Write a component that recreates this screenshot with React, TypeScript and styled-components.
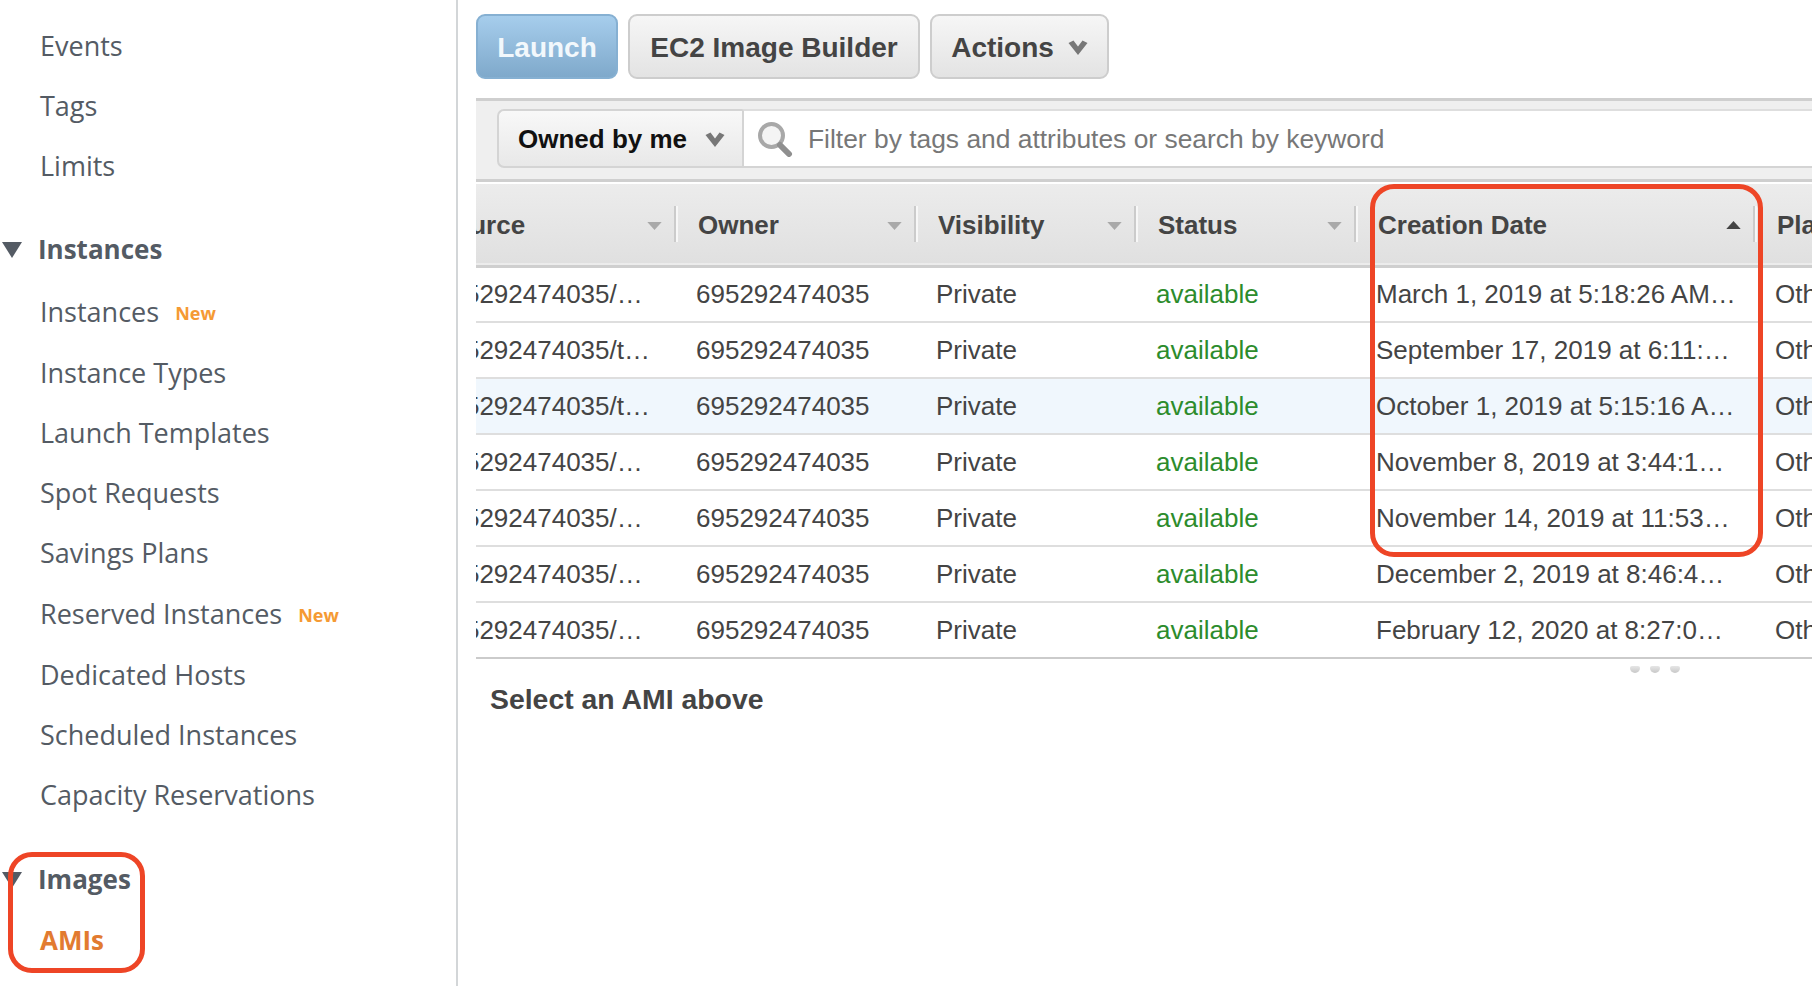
import React from "react";
import styled, { createGlobalStyle } from "styled-components";

const Global = createGlobalStyle`
  html, body {
    margin: 0;
    padding: 0;
    background: #fff;
  }
`;

const Page = styled.div`
  position: relative;
  width: 1812px;
  height: 986px;
  overflow: hidden;
  display: flex;
  background: #fff;
`;

const Sidebar = styled.nav`
  width: 458px;
  height: 986px;
  flex: none;
  box-sizing: border-box;
  padding-top: 15px;
  border-right: 2px solid #d3d6d8;
  font-family: "Open Sans", sans-serif;
  color: #545b64;
`;

const NavItem = styled.div<{ $tall?: boolean; $active?: boolean }>`
  height: ${props => (props.$tall ? 62 : 60)}px;
  padding-left: 40px;
  display: flex;
  align-items: center;
  font-size: ${props => (props.$active ? 26 : 27)}px;
  font-weight: ${props => (props.$active ? 700 : 400)};
  color: ${props => (props.$active ? "#e27b30" : "#545b64")};
`;

const NavHead = styled.div<{ $gap: number }>`
  height: 62px;
  margin-top: ${props => props.$gap}px;
  display: flex;
  align-items: center;
  font-size: 26px;
  font-weight: 700;
`;

const Caret = styled.svg`
  width: 20px;
  height: 17px;
  margin: 0 16px 0 2px;
  flex: none;
`;

const NewTag = styled.span`
  margin-left: 16px;
  margin-top: 4px;
  font-size: 18px;
  font-weight: 700;
  color: #f59a33;
`;

const Main = styled.main`
  flex: 1;
  min-width: 0;
  margin-left: 18px;
  padding-top: 14px;
  overflow: hidden;
  font-family: "Liberation Sans", Arial, sans-serif;
  color: #444;
`;

const Toolbar = styled.div`
  display: flex;
  gap: 10px;
  height: 65px;
`;

const Button = styled.div<{ $primary?: boolean; $width: number }>`
  width: ${props => props.$width}px;
  box-sizing: border-box;
  display: flex;
  align-items: center;
  justify-content: center;
  gap: 14px;
  padding-top: 2px;
  border-radius: 9px;
  border: 2px solid ${props => (props.$primary ? "#86b0d2" : "#cdcdcd")};
  background: ${props =>
    props.$primary
      ? "linear-gradient(#a6cdec, #7fa9cb)"
      : "linear-gradient(#f6f6f6, #e3e3e3)"};
  color: ${props => (props.$primary ? "#f2f8fc" : "#444")};
  font-size: 28px;
  font-weight: 700;
`;

const FilterBand = styled.div`
  height: 84px;
  margin-top: 19px;
  box-sizing: border-box;
  padding: 8px 0 11px 21px;
  display: flex;
  border-top: 3px solid #cfcfcf;
  border-bottom: 3px solid #cfcfcf;
  background: #efefef;
`;

const OwnerSelect = styled.div`
  width: 245px;
  box-sizing: border-box;
  display: flex;
  align-items: center;
  justify-content: space-between;
  padding: 1px 17px 0 19px;
  border: 2px solid #d4d4d4;
  border-right: none;
  border-radius: 7px 0 0 7px;
  background: linear-gradient(#f8f8f8, #e8e8e8);
  color: #111;
  font-size: 26px;
  font-weight: 700;
`;

const SearchBox = styled.div`
  flex: 1;
  display: flex;
  align-items: center;
  gap: 15px;
  padding: 1px 0 0 13px;
  border-left: 2px solid #d4d4d4;
  border-top: 2px solid #dedede;
  border-bottom: 2px solid #d4d4d4;
  background: #fff;
  color: #777;
  font-size: 26.4px;
`;

const Table = styled.table`
  width: 1336px;
  margin-top: 2px;
  table-layout: fixed;
  border-collapse: collapse;
  font-size: 26px;
`;

const Heading = styled.tr`
  height: 82px;
  background: linear-gradient(#ececec, #e0e0e0);
  border-bottom: 3px solid #cfcfcf;
  th {
    padding: 0;
    text-align: left;
  }
`;

const HeadCell = styled.div<{ $clipped?: boolean; $noLine?: boolean }>`
  height: 36px;
  box-sizing: border-box;
  display: flex;
  align-items: center;
  justify-content: space-between;
  padding: 2px 12px 0 ${props => (props.$clipped ? 0 : 22)}px;
  white-space: nowrap;
  font-weight: 700;
  color: #444;
  border-right: ${props => (props.$noLine ? "none" : "2px solid #cbcbcb")};
  box-shadow: ${props => (props.$noLine ? "none" : "2px 0 0 #f7f7f7")};
  span {
    margin-left: ${props => (props.$clipped ? -39 : 0)}px;
  }
`;

const Row = styled.tr<{ $selected?: boolean }>`
  height: 56px;
  background: ${props => (props.$selected ? "#f0f7fd" : "#fff")};
  border-bottom: 2px solid #dedede;
  &:last-child {
    border-bottom-color: #cbcbcb;
  }
`;

const Cell = styled.td<{ $clipped?: boolean; $green?: boolean }>`
  padding: 0 0 0 ${props => (props.$clipped ? 0 : 20)}px;
  white-space: nowrap;
  overflow: hidden;
  color: ${props => (props.$green ? "#2c8c2c" : "#444")};
  span {
    margin-left: ${props => (props.$clipped ? -40 : 0)}px;
    display: inline-block;
  }
`;

const Grip = styled.div`
  display: flex;
  justify-content: flex-end;
  gap: 10px;
  height: 8px;
  margin: 7px 132px 0 0;
`;

const GripDot = styled.i`
  width: 10px;
  height: 7px;
  border-radius: 2px 2px 5px 5px;
  background: linear-gradient(#e6e6e6, #c8c8c8);
`;

const Placeholder = styled.div`
  margin: 9px 0 0 14px;
  font-size: 28.4px;
  font-weight: 700;
  color: #444;
`;

const Callout = styled.div<{ $left: number; $top: number; $width: number; $height: number; $radius: number }>`
  position: absolute;
  left: ${props => props.$left}px;
  top: ${props => props.$top}px;
  width: ${props => props.$width}px;
  height: ${props => props.$height}px;
  box-sizing: border-box;
  border: 5px solid #ee4526;
  border-radius: ${props => props.$radius}px;
`;

const Triangle = ({ up, color }: { up?: boolean; color: string }) => (
  <svg width="15" height="9" viewBox="0 0 16 10" style={{ flex: "none" }}>
    <path d={up ? "M8 0 L16 9 L0 9 Z" : "M0 1 L16 1 L8 10 Z"} fill={color} />
  </svg>
);

const Chevron = () => (
  <svg width="20" height="15" viewBox="0 0 20 15" style={{ flex: "none" }}>
    <path d="M0.5 3 L5.5 0.5 L10 6.5 L14.5 0.5 L19.5 3 L10 15 Z" fill="#777" />
  </svg>
);

const SearchIcon = () => (
  <svg width="36" height="36" viewBox="0 0 36 36" style={{ flex: "none" }}>
    <circle cx="14.5" cy="14.5" r="11.5" fill="#f4f4f4" stroke="#a8a8a8" strokeWidth="4" />
    <path d="M23 24 L32 33" stroke="#8f8f8f" strokeWidth="6" strokeLinecap="round" />
  </svg>
);

const topLinks = ["Events", "Tags", "Limits"];
const instanceLinks: { label: string; isNew?: boolean }[] = [
  { label: "Instances", isNew: true },
  { label: "Instance Types" },
  { label: "Launch Templates" },
  { label: "Spot Requests" },
  { label: "Savings Plans" },
  { label: "Reserved Instances", isNew: true },
  { label: "Dedicated Hosts" },
  { label: "Scheduled Instances" },
  { label: "Capacity Reservations" },
];

const rows = [
  { source: "695292474035/…", date: "March 1, 2019 at 5:18:26 AM…" },
  { source: "695292474035/t…", date: "September 17, 2019 at 6:11:…" },
  { source: "695292474035/t…", date: "October 1, 2019 at 5:15:16 A…", selected: true },
  { source: "695292474035/…", date: "November 8, 2019 at 3:44:1…" },
  { source: "695292474035/…", date: "November 14, 2019 at 11:53…" },
  { source: "695292474035/…", date: "December 2, 2019 at 8:46:4…" },
  { source: "695292474035/…", date: "February 12, 2020 at 8:27:0…" },
];

const columns = [200, 240, 220, 220, 399, 57];

export default function App() {
  return (
    <Page>
      <Global />
      <Sidebar>
        {topLinks.map(label => (
          <NavItem key={label}>{label}</NavItem>
        ))}
        <NavHead $gap={23}>
          <Caret viewBox="0 0 20 17">
            <path d="M0 1 L20 1 L10 17 Z" fill="#545b64" />
          </Caret>
          Instances
        </NavHead>
        {instanceLinks.map(link => (
          <NavItem key={link.label} $tall={link.isNew}>
            {link.label}
            {link.isNew && <NewTag>New</NewTag>}
          </NavItem>
        ))}
        <NavHead $gap={24}>
          <Caret viewBox="0 0 20 17">
            <path d="M0 1 L20 1 L10 17 Z" fill="#545b64" />
          </Caret>
          Images
        </NavHead>
        <NavItem $active>AMIs</NavItem>
      </Sidebar>
      <Main>
        <Toolbar>
          <Button $primary $width={142}>Launch</Button>
          <Button $width={292}>EC2 Image Builder</Button>
          <Button $width={179}>
            Actions
            <Chevron />
          </Button>
        </Toolbar>
        <FilterBand>
          <OwnerSelect>
            Owned by me
            <Chevron />
          </OwnerSelect>
          <SearchBox>
            <SearchIcon />
            Filter by tags and attributes or search by keyword
          </SearchBox>
        </FilterBand>
        <Table>
          <colgroup>
            {columns.map((width, i) => (
              <col key={i} width={width} />
            ))}
          </colgroup>
          <thead>
            <Heading>
              <th>
                <HeadCell $clipped>
                  <span>Source</span>
                  <Triangle color="#a9a9a9" />
                </HeadCell>
              </th>
              <th>
                <HeadCell>
                  <span>Owner</span>
                  <Triangle color="#a9a9a9" />
                </HeadCell>
              </th>
              <th>
                <HeadCell>
                  <span>Visibility</span>
                  <Triangle color="#a9a9a9" />
                </HeadCell>
              </th>
              <th>
                <HeadCell>
                  <span>Status</span>
                  <Triangle color="#a9a9a9" />
                </HeadCell>
              </th>
              <th>
                <HeadCell>
                  <span>Creation Date</span>
                  <Triangle up color="#444" />
                </HeadCell>
              </th>
              <th>
                <HeadCell $noLine>
                  <span>Platform</span>
                </HeadCell>
              </th>
            </Heading>
          </thead>
          <tbody>
            {rows.map((row, i) => (
              <Row key={i} $selected={row.selected}>
                <Cell $clipped>
                  <span>{row.source}</span>
                </Cell>
                <Cell>695292474035</Cell>
                <Cell>Private</Cell>
                <Cell $green>available</Cell>
                <Cell>{row.date}</Cell>
                <Cell>Other Linux</Cell>
              </Row>
            ))}
          </tbody>
        </Table>
        <Grip>
          <GripDot />
          <GripDot />
          <GripDot />
        </Grip>
        <Placeholder>Select an AMI above</Placeholder>
      </Main>
      <Callout $left={8} $top={852} $width={137} $height={121} $radius={24} />
      <Callout $left={1370} $top={184} $width={393} $height={373} $radius={24} />
    </Page>
  );
}
